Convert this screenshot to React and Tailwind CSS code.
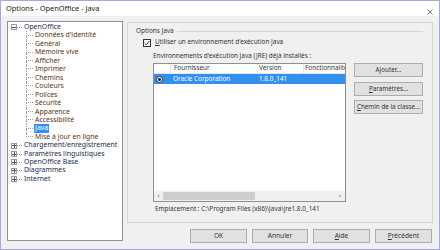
import React from "react";

const CHILDREN = [
  "Données d'identité",
  "Général",
  "Mémoire vive",
  "Afficher",
  "Imprimer",
  "Chemins",
  "Couleurs",
  "Polices",
  "Sécurité",
  "Apparence",
  "Accessibilité",
  "Java",
  "Mise à jour en ligne",
];

const TOP_LEVEL = [
  "Chargement/enregistrement",
  "Paramètres linguistiques",
  "OpenOffice Base",
  "Diagrammes",
  "Internet",
];

function Expander({ open }) {
  return (
    <div className="w-[6px] h-[6px] border border-[#9a9a9a] bg-white flex items-center justify-center shrink-0">
      <div className="relative w-[4px] h-[4px] flex items-center justify-center">
        <div className="w-[4px] h-px bg-[#555]" />
        {!open && <div className="absolute w-px h-[4px] bg-[#555]" />}
      </div>
    </div>
  );
}

function TopRow({ label, open }) {
  return (
    <div className="h-[8.46px] flex items-center pl-[3px]">
      <Expander open={open} />
      <div className="w-[5px] border-t border-dotted border-[#a0a0a0]" />
      <span className="ml-[2px] text-[#1c2a55] whitespace-nowrap">{label}</span>
    </div>
  );
}

function ChildRow({ label, last, selected }) {
  return (
    <div className="h-[8.46px] flex pl-[18px]">
      <div className="w-[7px] flex flex-col shrink-0">
        <div className="h-1/2 border-l border-b border-dotted border-[#a0a0a0]" />
        <div className={"h-1/2 border-l border-dotted " + (last ? "border-transparent" : "border-[#a0a0a0]")} />
      </div>
      <span
        className={
          "ml-px px-px whitespace-nowrap leading-[8.46px] " +
          (selected ? "bg-[#3390ee] text-white" : "text-[#5a3416]")
        }
      >
        {label}
      </span>
    </div>
  );
}

function Tree() {
  return (
    <div className="w-[116px] h-[220px] bg-white border border-[#8d9196] pt-px shrink-0 text-[6.9px]">
      <TopRow label="OpenOffice" open />
      {CHILDREN.map((c, i) => (
        <ChildRow key={c} label={c} last={i === CHILDREN.length - 1} selected={c === "Java"} />
      ))}
      {TOP_LEVEL.map((t) => (
        <TopRow key={t} label={t} />
      ))}
    </div>
  );
}

function Button({ children, className = "" }) {
  return (
    <div
      className={
        "h-[14px] bg-[#e1e1e1] border border-[#adadad] text-[#333] flex items-center justify-center whitespace-nowrap " +
        className
      }
    >
      {children}
    </div>
  );
}

function JreTable() {
  return (
    <div className="w-[193px] h-[139px] bg-white border border-[#8d9196] flex flex-col overflow-hidden">
      <div className="h-[10px] flex border-b border-[#e5e5e5] text-[#333] shrink-0">
        <div className="w-[17px] border-r border-[#e5e5e5]" />
        <div className="w-[87px] border-r border-[#e5e5e5] pl-[3px] flex items-center">Fournisseur</div>
        <div className="w-[46px] border-r border-[#e5e5e5] pl-px flex items-center">Version</div>
        <div className="flex-1 pl-px flex items-center whitespace-nowrap overflow-hidden">Fonctionnalités</div>
      </div>
      <div className="h-[10px] flex bg-[#3390ee] text-white shrink-0">
        <div className="w-[17px] flex items-center pl-[2px]">
          <div className="w-[7px] h-[7px] rounded-full bg-white border border-[#333] flex items-center justify-center">
            <div className="w-[3px] h-[3px] rounded-full bg-[#111]" />
          </div>
        </div>
        <div className="w-[88px] pl-[2px] flex items-center">Oracle Corporation</div>
        <div className="flex-1 flex items-center">1.8.0_141</div>
      </div>
      <div className="flex-1" />
      <div className="h-[10px] flex items-center bg-[#f0f0f0] text-[#555] shrink-0">
        <div className="w-[9px] text-center leading-none">‹</div>
        <div className="w-[92px] h-[8px] bg-[#cdcdcd]" />
        <div className="flex-1" />
        <div className="w-[10px] text-center leading-none">›</div>
      </div>
    </div>
  );
}

function JavaOptions() {
  return (
    <div className="h-[201px] border border-[#d6d6d6] pl-[8px] pt-[4px] text-[#333]">
      <div className="h-[9px] flex items-center">
        <span className="whitespace-nowrap">Options Java</span>
        <div className="flex-1 h-px bg-[#d6d6d6] ml-[3px] mr-[9px]" />
      </div>
      <div className="h-[9px] mt-[2px] flex items-center ml-[7px]">
        <div className="w-[8px] h-[8px] bg-white border border-[#333] flex items-center justify-center">
          <svg width="6" height="6" viewBox="0 0 6 6">
            <path d="M0.6 3.2 L2.3 4.8 L5.4 1" fill="none" stroke="#222" strokeWidth="0.9" />
          </svg>
        </div>
        <span className="ml-[4px] whitespace-nowrap">
          <span className="underline">U</span>tiliser un environnement d'exécution Java
        </span>
      </div>
      <div className="h-[9px] mt-[5px] ml-[17px] flex items-center whitespace-nowrap">
        Environnements d'exécution Java (JRE) déjà installés :
      </div>
      <div className="mt-[2px] ml-[17px] flex items-start">
        <JreTable />
        <div className="ml-[8px] w-[69px] flex flex-col text-[6.3px]">
          <Button>Ajouter...</Button>
          <Button className="mt-[5px]">
            <span className="underline">P</span>aramètres...
          </Button>
          <Button className="mt-[4px]">
            <span className="underline">C</span>hemin de la classe...
          </Button>
        </div>
      </div>
      <div className="h-[9px] mt-[3px] ml-[19px] flex items-center whitespace-nowrap">
        Emplacement : C:\Program Files (x86)\Java\jre1.8.0_141
      </div>
    </div>
  );
}

export default function App() {
  return (
    <div className="w-[440px] h-[250px] bg-[#f0f0f0] border border-[#aaa7db] flex flex-col overflow-hidden font-['Noto_Sans',sans-serif] text-[6.4px] leading-none">
      <div className="h-[15px] bg-white flex items-center justify-between pl-[5px] pr-[6px] shrink-0">
        <span className="text-[7.4px] text-[#222]">Options - OpenOffice - Java</span>
        <svg width="6" height="6" viewBox="0 0 6 6" className="mt-[6px]">
          <path d="M0.5 0.5 L5.5 5.5 M5.5 0.5 L0.5 5.5" stroke="#555" strokeWidth="0.8" />
        </svg>
      </div>
      <div className="flex pl-[6px] pt-[5px]">
        <Tree />
        <div className="ml-[4px] w-[306px] pt-px flex flex-col">
          <JavaOptions />
          <div className="mt-[6px] flex justify-end gap-[5px] pr-px text-[6.6px]">
            <Button className="w-[57px] h-[13px] border-[#3d7fc6]">OK</Button>
            <Button className="w-[56px] h-[13px]">Annuler</Button>
            <Button className="w-[57px] h-[13px]">
              <span className="underline">A</span>ide
            </Button>
            <Button className="w-[57px] h-[13px]">
              <span className="underline">P</span>récédent
            </Button>
          </div>
        </div>
      </div>
    </div>
  );
}
